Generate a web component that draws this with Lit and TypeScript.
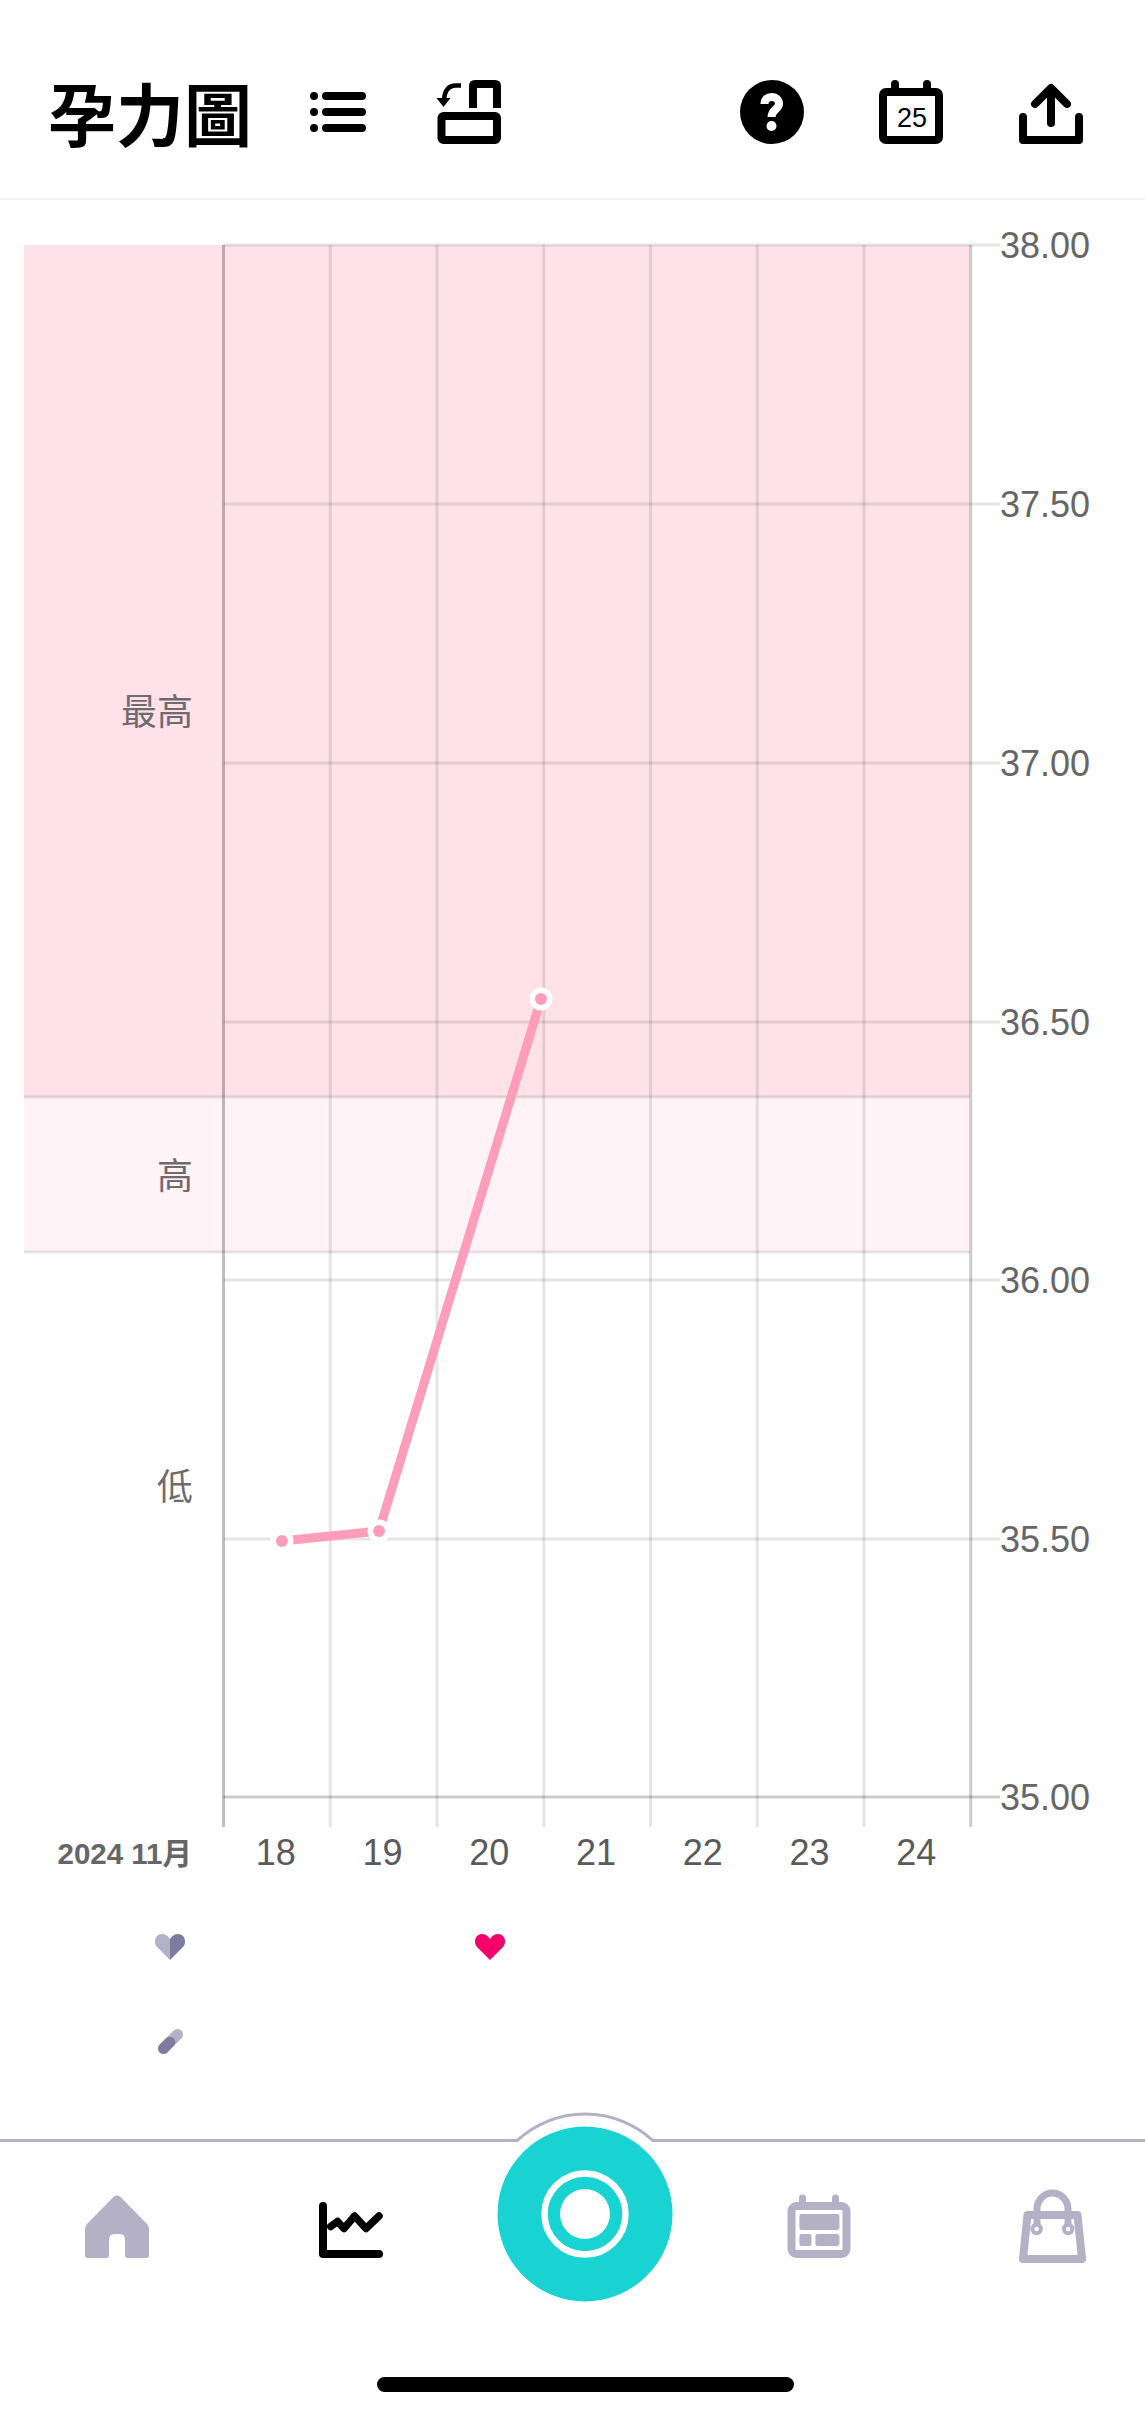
import { LitElement, html, svg, css, unsafeCSS } from "lit";
import { customElement } from "lit/decorators.js";

const GRAY = "#B4B0C6";
const DARK = "#7F7BA0";
const X0 = 223.5;
const DX = 106.75;
const YS = [245, 504, 763, 1022, 1280, 1539, 1797];
const VALUES = ["38.00", "37.50", "37.00", "36.50", "36.00", "35.50", "35.00"];
const DAYS = [18, 19, 20, 21, 22, 23, 24];
const POINTS: [number, number][] = [[282, 1541], [379, 1531], [541, 999]];

const heartLeft = "M15 5C13 1.5 10 0 7 0 3 0 0 3 0 7.5 0 10 1 12 2.5 13.5L15 26Z";
const heartRight = "M15 5C17 1.5 20 0 23 0 27 0 30 3 30 7.5 30 10 29 12 27.5 13.5L15 26Z";

@customElement("app-root")
export class AppRoot extends LitElement {
  static styles = css`
    :host { display: block; width: 1145px; height: 2416px; background: #fff; overflow: hidden; }
    .page { display: flex; flex-direction: column; height: 2416px; }
    svg { display: block; flex: none; }

    header { display: flex; align-items: flex-start; height: 198px; border-bottom: 2px solid #f6f1f3; box-sizing: content-box; flex: none; }
    h1 { margin: 67px 0 0 48px; width: 204px; font: 700 68px/90px "Noto Sans CJK TC", sans-serif; color: #000; white-space: nowrap; }
    .i-list { margin: 92px 0 0 58px; }
    .i-lock { margin: 80px 0 0 70px; }
    .i-help { margin: 80px 0 0 239px; }
    .i-cal { margin: 80px 0 0 75px; }
    .i-up { margin: 80px 0 0 76px; }
    .cal-num { font: 400 27px "Liberation Sans", sans-serif; fill: #000; text-anchor: middle; }

    .val { font: 400 36px "Liberation Sans", sans-serif; fill: #666; dominant-baseline: central; }
    .day { font: 400 36px "Liberation Sans", sans-serif; fill: #5a5a5a; text-anchor: middle; dominant-baseline: central; }
    .month { font: 700 29.5px "Liberation Sans", "Noto Sans CJK TC", sans-serif; fill: #666; text-anchor: end; dominant-baseline: central; }
    .band { font: 400 36px "Noto Sans CJK TC", sans-serif; fill: #6f6b6d; text-anchor: end; dominant-baseline: central; }

    .markers { display: grid; grid-template-columns: 223px repeat(7, 106.75px); row-gap: 69px; padding-top: 54px; flex: none; }
    .mark-head { grid-column: 1; justify-self: end; margin-right: 38px; }
    .mark-day { grid-column: 4; justify-self: center; }
    .pill { grid-column: 1; justify-self: end; margin-right: 40px; }

    nav { margin-top: auto; position: relative; border-top: 3px solid ${unsafeCSS(GRAY)}; flex: none; }
    .tabs { display: grid; grid-template-columns: repeat(4, 234px) 209px; height: 116px; align-items: end; justify-items: center; }
    .tab-bag { justify-self: start; margin: 0 0 -5px 83px; }
    .fab { position: absolute; left: 482px; top: -31px; }
    .indicator { width: 417px; height: 15px; border-radius: 8px; background: #000; margin: 119px 0 24px 377px; }
  `;

  private chart() {
    const xs = Array.from({ length: 8 }, (_, i) => X0 + i * DX);
    return html`<svg width="1145" height="1680" viewBox="0 200 1145 1680" aria-label="chart">
      <rect x="24" y="245" width="946" height="852" fill="#FEE1E9"></rect>
      <rect x="24" y="1097" width="946" height="155" fill="#FFF3F7"></rect>

      ${xs.map((x, i) => svg`<line x1=${x} x2=${x} y1="245" y2="1827" stroke="#000"
        stroke-opacity=${i === 0 ? 0.25 : i === 7 ? 0.2 : 0.1} stroke-width="3"></line>`)}
      ${YS.map((y, i) => svg`<line x1=${X0} x2="1000" y1=${y} y2=${y} stroke="#000"
        stroke-opacity=${i === 6 ? 0.2 : 0.1} stroke-width="3"></line>`)}
      <line x1="24" x2="970" y1="1097" y2="1097" stroke="#000" stroke-opacity="0.1" stroke-width="3"></line>
      <line x1="24" x2="970" y1="1252" y2="1252" stroke="#000" stroke-opacity="0.1" stroke-width="3"></line>

      <polyline points=${POINTS.map((p) => p.join(",")).join(" ")} fill="none" stroke="#FF9DBB" stroke-width="9"></polyline>
      ${POINTS.map(([x, y]) => svg`<circle cx=${x} cy=${y} r="11.5" fill="#fff"></circle>
        <circle cx=${x} cy=${y} r="6" fill="#FF9DBB"></circle>`)}

      ${YS.map((y, i) => svg`<text class="val" x="1000" y=${y}>${VALUES[i]}</text>`)}
      ${DAYS.map((d, i) => svg`<text class="day" x=${X0 + (i + 0.5) * DX - 1} y="1852">${d}</text>`)}
      <text class="month" x="192" y="1853">2024 11月</text>
      <text class="band" x="193" y="709">最高</text>
      <text class="band" x="193" y="1173">高</text>
      <text class="band" x="193" y="1484">低</text>
    </svg>`;
  }

  render() {
    return html`<div class="page">
      <header>
        <h1>孕力圖</h1>
        <svg class="i-list" width="56" height="40" viewBox="0 0 56 40">
          <circle cx="4" cy="4" r="4"></circle><circle cx="4" cy="20" r="4"></circle><circle cx="4" cy="36" r="4"></circle>
          <rect x="12" y="0" width="44" height="8" rx="4"></rect><rect x="12" y="16" width="44" height="8" rx="4"></rect><rect x="12" y="32" width="44" height="8" rx="4"></rect>
        </svg>
        <svg class="i-lock" width="65" height="64" viewBox="0 0 65 64" fill="none" stroke="#000">
          <rect x="5.5" y="36" width="55.5" height="24" rx="2" stroke-width="8"></rect>
          <path d="M37 28V6Q37 4 39 4H59Q61 4 61 6V28" stroke-width="8"></path>
          <path d="M25 5.5H20Q9 5.5 8 20" stroke-width="4.5"></path>
          <path d="M0.5 18H14.5L7.5 27Z" fill="#000" stroke="none"></path>
        </svg>
        <svg class="i-help" width="64" height="64" viewBox="0 0 64 64">
          <circle cx="32" cy="32" r="32"></circle>
          <path d="M24.5 24C24.5 19 28 17 31.5 17 36 17 39 20 39 24 39 29 31.5 30 31.5 37" fill="none" stroke="#fff" stroke-width="8"></path>
          <circle cx="31.5" cy="46" r="5" fill="#fff"></circle>
        </svg>
        <svg class="i-cal" width="64" height="64" viewBox="0 0 64 64" fill="none" stroke="#000">
          <rect x="4" y="12" width="56" height="48" rx="3" stroke-width="8"></rect>
          <path d="M16 4V10M48 4V10" stroke-width="8" stroke-linecap="round"></path>
          <text class="cal-num" x="33" y="47" stroke="none">25</text>
        </svg>
        <svg class="i-up" width="64" height="64" viewBox="0 0 64 64" fill="none" stroke="#000" stroke-width="8" stroke-linecap="round" stroke-linejoin="round">
          <path d="M4 37V60H60V37"></path>
          <path d="M32 43V9M16 24L32 8L48 24"></path>
        </svg>
      </header>

      ${this.chart()}

      <div class="markers">
        <svg class="mark-head" width="30" height="26" viewBox="0 0 30 26">
          <path d=${heartLeft} fill=${GRAY}></path><path d=${heartRight} fill=${DARK}></path>
        </svg>
        <svg class="mark-day" width="30" height="26" viewBox="0 0 30 26">
          <path d=${heartLeft} fill="#F5006A"></path><path d=${heartRight} fill="#F5006A"></path>
        </svg>
        <svg class="pill" width="25" height="25" viewBox="0 0 25 25" fill="none" stroke-width="11" stroke-linecap="round">
          <path d="M12.8 12.2L19.5 5.5" stroke=${GRAY}></path>
          <path d="M11.8 13.2L5.5 19.5" stroke=${DARK}></path>
        </svg>
      </div>

      <nav>
        <div class="tabs">
          <svg width="64" height="63" viewBox="0 0 64 63">
            <path fill=${GRAY} d="M29 1.5Q32-.5 35 1.5L62 29Q64 31 64 34V60Q64 63 61 63H43Q40 63 40 60V45Q40 39 35 39H29Q24 39 24 45V60Q24 63 21 63H3Q0 63 0 60V34Q0 31 2 29Z"></path>
          </svg>
          <svg width="64" height="56" viewBox="0 0 64 56" fill="none" stroke="#000" stroke-width="8" stroke-linecap="round" stroke-linejoin="round">
            <path d="M4 4V52H60"></path>
            <path d="M11.7 24.5L18.5 19.5L25 26.5L35.6 14L47 26.5L60 14" stroke-width="7.5"></path>
          </svg>
          <div></div>
          <svg width="64" height="64" viewBox="0 0 64 64" fill=${GRAY}>
            <rect x="4.5" y="12" width="55" height="48" rx="5" fill="none" stroke=${GRAY} stroke-width="8"></rect>
            <path d="M15.5 4V12M48.5 4V12" stroke=${GRAY} stroke-width="7" stroke-linecap="round"></path>
            <rect x="12.4" y="20" width="40" height="16" rx="2"></rect>
            <rect x="12.4" y="40" width="12" height="12" rx="2"></rect>
            <rect x="28.4" y="40" width="24" height="12" rx="2"></rect>
          </svg>
          <svg class="tab-bag" width="67" height="74" viewBox="0 0 67 74" fill="none" stroke=${GRAY}>
            <path d="M8.5 26H58.5L63 70H4Z" stroke-width="8" stroke-linejoin="round"></path>
            <path d="M18 40V20A15.5 16 0 0 1 49 20V40" stroke-width="7"></path>
            <circle cx="17.6" cy="40" r="4.2" fill="#fff" stroke-width="4"></circle>
            <circle cx="49.2" cy="40" r="4.2" fill="#fff" stroke-width="4"></circle>
          </svg>
        </div>
        <svg class="fab" width="206" height="206" viewBox="0 0 206 206">
          <rect x="36" y="28" width="134" height="6" fill="#fff"></rect>
          <path d="M35.3 29.4A100 100 0 0 1 170.7 29.4" fill="#fff" stroke=${GRAY} stroke-width="3"></path>
          <circle cx="103" cy="103" r="87.5" fill="#19D3D3"></circle>
          <circle cx="103" cy="103" r="40.5" fill="none" stroke="#fff" stroke-width="6.5"></circle>
          <circle cx="103" cy="103" r="25" fill="#fff"></circle>
        </svg>
        <div class="indicator"></div>
      </nav>
    </div>`;
  }
}
